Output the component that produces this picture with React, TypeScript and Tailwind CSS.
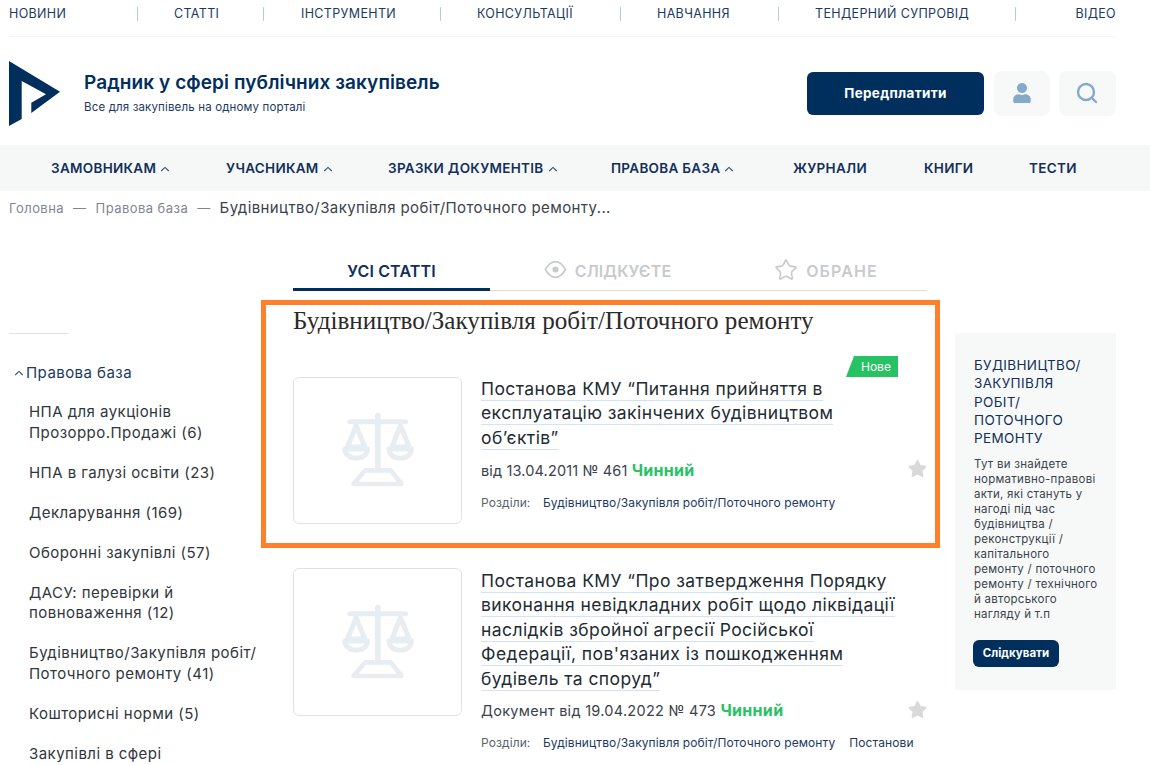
import { Search, Star } from "lucide-react";
import { FaUser, FaStar } from "react-icons/fa";

const topCells = [
  { t: "НОВИНИ", c: "w-[129px] pl-0 border-r" },
  { t: "СТАТТІ", c: "w-[126px] pl-[36px] border-r" },
  { t: "ІНСТРУМЕНТИ", c: "w-[177px] pl-[37px] border-r" },
  { t: "КОНСУЛЬТАЦІЇ", c: "w-[180px] pl-[36px] border-r" },
  { t: "НАВЧАННЯ", c: "w-[158px] pl-[36px] border-r" },
  { t: "ТЕНДЕРНИЙ СУПРОВІД", c: "w-[237px] pl-[36px] border-r" },
  { t: "ВІДЕО", c: "flex-1 text-right" },
];

const mainNav = [
  { t: "ЗАМОВНИКАМ", ch: true, c: "w-[175px]" },
  { t: "УЧАСНИКАМ", ch: true, c: "w-[162px]" },
  { t: "ЗРАЗКИ ДОКУМЕНТІВ", ch: true, c: "w-[223px]" },
  { t: "ПРАВОВА БАЗА", ch: true, c: "w-[182px]" },
  { t: "ЖУРНАЛИ", ch: false, c: "w-[131px]" },
  { t: "КНИГИ", ch: false, c: "w-[105px]" },
  { t: "ТЕСТИ", ch: false, c: "" },
];

const sideItems = [
  ["НПА для аукціонів", "Прозорро.Продажі (6)"],
  ["НПА в галузі освіти (23)"],
  ["Декларування (169)"],
  ["Оборонні закупівлі (57)"],
  ["ДАСУ: перевірки й", "повноваження (12)"],
  ["Будівництво/Закупівля робіт/", "Поточного ремонту (41)"],
  ["Кошторисні норми (5)"],
  ["Закупівлі в сфері"],
];

const panelText = [
  "Тут ви знайдете",
  "нормативно-правові",
  "акти, які стануть у",
  "нагоді під час",
  "будівництва /",
  "реконструкції /",
  "капітального",
  "ремонту / поточного",
  "ремонту / технічного",
  "й авторського",
  "нагляду й т.п",
];

function Chevron() {
  return (
    <svg width="10" height="6" viewBox="0 0 10 6" fill="none" className="shrink-0">
      <path d="M1.2 5 L5 1.4 L8.8 5" stroke="#33506f" strokeWidth="1.1" />
    </svg>
  );
}

function Scales() {
  return (
    <svg width="72" height="75" viewBox="170 130 215 225" fill="none" stroke="#e8edf1" strokeLinecap="round" strokeLinejoin="round">
      <path d="M277 138 V300" strokeWidth="17" />
      <path d="M193 156 H360" strokeWidth="15" />
      <path d="M212 168 L186 232 H238 Z" strokeWidth="15" />
      <path d="M345 168 L319 232 H371 Z" strokeWidth="15" />
      <path d="M178 238 H246 A34 28 0 0 1 178 238 Z" strokeWidth="15" />
      <path d="M310 238 H378 A34 28 0 0 1 310 238 Z" strokeWidth="15" />
      <path d="M239 302 H316 L348 343 H204 Z" strokeWidth="14" />
    </svg>
  );
}

function Thumb({ className }: { className: string }) {
  return (
    <div className={"w-[169px] shrink-0 rounded-md border border-[#e2e2e2] bg-white flex items-center justify-center " + className}>
      <Scales />
    </div>
  );
}

function Title({ lines }: { lines: string[] }) {
  return (
    <div className="text-[17.5px] leading-[24.4px] text-[#222b33] tracking-[0.42px]">
      {lines.map((l, i) => (
        <div key={i}>
          <span className="border-b border-[#cfe4f7] pb-[1px]">{l}</span>
        </div>
      ))}
    </div>
  );
}

export default function App() {
  return (
    <div className="h-[765px] w-[1150px] overflow-hidden bg-white font-['Inter',sans-serif] text-[#222b33]">
      {/* top nav */}
      <div className="mx-[9px] w-[1107px] h-[37px] border-b border-[#f2f3f4] pt-[7px]">
        <div className="flex h-[14px] items-center text-[12.5px] leading-[14px] text-[#1c3a60] tracking-[0.35px]">
          {topCells.map((c) => (
            <div key={c.t} className={"h-[14px] border-[#b6cadb] whitespace-nowrap " + c.c}>
              {c.t}
            </div>
          ))}
        </div>
      </div>

      {/* header */}
      <div className="h-[108px] mx-[9px] w-[1107px] flex items-center">
        <svg width="51" height="65" viewBox="0 0 51 65" className="shrink-0 mt-[4px]">
          <polygon points="0,0 51,30.7 22.3,52 22.3,41.7 37,33.3 12.7,20 12.7,58 0,65" fill="#002e5d" />
        </svg>
        <div className="ml-[24px] mt-[3px]">
          <div className="text-[19px] leading-[24px] font-semibold text-[#002e5d] tracking-[0.1px]">Радник у сфері публічних закупівель</div>
          <div className="text-[11.5px] leading-[14px] mt-[5px] text-[#1c3a60] tracking-[0.15px]">Все для закупівель на одному порталі</div>
        </div>
        <div className="ml-auto flex items-center mt-[4px]">
          <div className="w-[177px] h-[43px] rounded-md bg-[#002e5d] text-white text-[13.5px] font-bold flex items-center justify-center tracking-[0.3px]">Передплатити</div>
          <div className="ml-[10px] w-[56px] h-[45px] rounded-lg bg-[#f7f9f9] flex items-center justify-center">
            <FaUser size={20} color="#85a9cb" />
          </div>
          <div className="ml-[9px] w-[57px] h-[45px] rounded-lg bg-[#f7f9f9] flex items-center justify-center">
            <Search size={24} color="#85a9cb" strokeWidth={2.4} className="-ml-[2px]" />
          </div>
        </div>
      </div>

      {/* main nav */}
      <div className="h-[46px] bg-[#f6f8f8] pl-[51px] pt-[1px] flex items-center text-[13.5px] font-semibold text-[#12305a] tracking-[0.3px]">
        {mainNav.map((n) => (
          <div key={n.t} className={"flex items-center gap-[4px] whitespace-nowrap " + n.c}>
            {n.t}
            {n.ch ? <Chevron /> : null}
          </div>
        ))}
      </div>

      {/* breadcrumb */}
      <div className="h-[34px] pl-[9px] pt-[1px] flex items-center text-[13px] tracking-[0.45px] text-[#7e8890] whitespace-nowrap">
        <span>Головна</span>
        <span className="mx-[9px]">—</span>
        <span>Правова база</span>
        <span className="mx-[9px]">—</span>
        <span className="text-[15px] tracking-[0.4px] text-[#3a434b]">Будівництво/Закупівля робіт/Поточного ремонту...</span>
      </div>

      {/* body */}
      <div className="flex">
        <aside className="w-[261px] shrink-0 pl-[9px] pt-[108px]">
          <div className="w-[60px] border-t border-[#e2e2e2]" />
          <div className="mt-[29px] flex items-center gap-[2px] pl-[5px] text-[15px] leading-[20px] tracking-[0.45px] text-[#1c3a60]">
            <Chevron />
            <span>Правова база</span>
          </div>
          <div className="mt-[19px] pl-[20px] flex flex-col gap-[19.5px] text-[15px] leading-[20.5px] tracking-[0.45px] text-[#30363c] whitespace-nowrap">
            {sideItems.map((lines, i) => (
              <div key={i}>
                {lines.map((l) => (
                  <div key={l}>{l}</div>
                ))}
              </div>
            ))}
          </div>
        </aside>

        <main className="w-[679px] shrink-0">
          <div className="ml-[32px] w-[634px] h-[66px] pt-[32px] flex border-b border-[#dcdcdc] text-[16px] tracking-[0.15px] font-semibold whitespace-nowrap">
            <div className="w-[197px] h-[34px] border-b-[3px] border-[#002e5d] flex items-start justify-center text-[#12305a] pt-[2px]">УСІ СТАТТІ</div>
            <div className="w-[235px] flex items-start justify-center gap-[8px] text-[#c8cacc] pt-[2px]">
              <svg width="23" height="23" viewBox="0 0 24 24" fill="none" stroke="#c8cacc" strokeWidth="1.7" className="mt-[-1px]">
                <path d="M1.5 12 C5 6 8.5 3.8 12 3.8 C15.5 3.8 19 6 22.5 12 C19 18 15.5 20.2 12 20.2 C8.5 20.2 5 18 1.5 12 Z" />
                <circle cx="12" cy="12" r="3.2" fill="#c8cacc" stroke="none" />
              </svg>
              СЛІДКУЄТЕ
            </div>
            <div className="flex-1 flex items-start justify-center gap-[8px] text-[#c8cacc] pt-[2px] tracking-[1.1px]">
              <Star size={24} color="#c8cacc" strokeWidth={1.6} className="mt-[-1px]" />
              ОБРАНЕ
            </div>
          </div>

          <section className="relative mt-[9px] h-[248px] border-[5px] border-[#ff7f2a] pl-[27px] pt-[1px]">
            <h1 className="font-['Liberation_Serif',serif] text-[25.1px] leading-[30px] text-[#2a2a2a]">Будівництво/Закупівля робіт/Поточного ремонту</h1>
            <div className="absolute left-[580px] top-[51px] h-[21px] w-[52px] bg-[#27c264] text-white text-[12px] leading-[22px] pl-[15px] [clip-path:polygon(8px_0,100%_0,100%_100%,0_100%)]">Нове</div>
            <div className="mt-[41px] flex">
              <Thumb className="h-[147px]" />
              <div className="ml-[19px] flex-1 relative">
                <Title lines={["Постанова КМУ “Питання прийняття в", "експлуатацію закінчених будівництвом", "об’єктів”"]} />
                <div className="mt-[10px] text-[14.5px] leading-[20px] tracking-[0.15px] text-[#3a434b] whitespace-nowrap">
                  від 13.04.2011 № 461 <span className="font-bold text-[16px] tracking-[0.3px] text-[#27c264]">Чинний</span>
                </div>
                <div className="mt-[15px] flex text-[12px] tracking-[0.1px] leading-[14px] whitespace-nowrap">
                  <span className="text-[#5a636b] w-[62px]">Розділи:</span>
                  <span className="text-[#1c3a60]">Будівництво/Закупівля робіт/Поточного ремонту</span>
                </div>
                <FaStar size={19} color="#d9d9d9" className="absolute left-[427px] top-[82px]" />
              </div>
            </div>
          </section>

          <div className="mt-[20px] ml-[32px] flex">
            <Thumb className="h-[148px]" />
            <div className="ml-[19px] flex-1 relative pt-[1px]">
              <Title lines={["Постанова КМУ “Про затвердження Порядку", "виконання невідкладних робіт щодо ліквідації", "наслідків збройної агресії Російської", "Федерації, пов'язаних із пошкодженням", "будівель та споруд”"]} />
              <div className="mt-[9px] text-[14.5px] leading-[20px] tracking-[0.28px] text-[#3a434b] whitespace-nowrap">
                Документ від 19.04.2022 № 473 <span className="font-bold text-[16px] tracking-[0.3px] text-[#27c264]">Чинний</span>
              </div>
              <div className="mt-[15px] flex text-[12px] tracking-[0.1px] leading-[14px] whitespace-nowrap">
                <span className="text-[#5a636b] w-[62px]">Розділи:</span>
                <span className="text-[#1c3a60]">Будівництво/Закупівля робіт/Поточного ремонту</span>
                <span className="ml-[14px] text-[#1c3a60]">Постанови</span>
              </div>
              <FaStar size={19} color="#d9d9d9" className="absolute left-[427px] top-[132px]" />
            </div>
          </div>
        </main>

        <aside className="ml-[15px] mt-[108px] w-[161px] h-[357px] bg-[#f7f9f9] pl-[19px] pt-[23px]">
          <div className="text-[13.5px] leading-[18.3px] text-[#12305a] tracking-[0.35px] whitespace-nowrap">
            <div>БУДІВНИЦТВО/</div>
            <div>ЗАКУПІВЛЯ</div>
            <div>РОБІТ/</div>
            <div>ПОТОЧНОГО</div>
            <div>РЕМОНТУ</div>
          </div>
          <div className="mt-[10px] text-[11.5px] tracking-[0.25px] leading-[15px] text-[#3a434b] whitespace-nowrap">
            {panelText.map((l) => (
              <div key={l}>{l}</div>
            ))}
          </div>
          <div className="mt-[18px] -ml-[1px] w-[86px] h-[27px] rounded-md bg-[#002e5d] text-white text-[11.5px] font-bold flex items-center justify-center">Слідкувати</div>
        </aside>
      </div>
    </div>
  );
}
